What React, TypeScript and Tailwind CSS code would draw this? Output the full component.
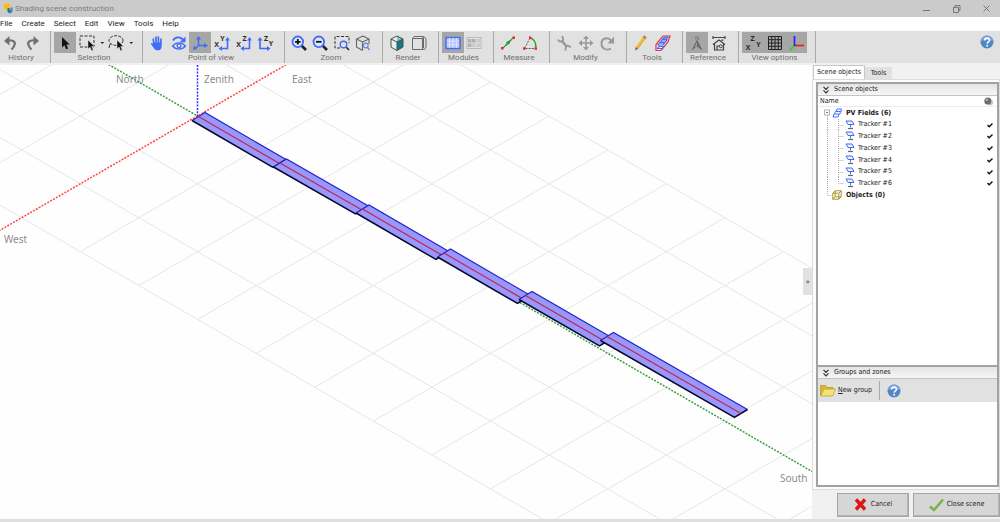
import React from "react";

type P = { children?: React.ReactNode };

function Ico({ children }: P) {
  return (
    <svg width="20" height="20" viewBox="0 0 20 20" fill="none" className="block shrink-0" aria-hidden="true">
      {children}
    </svg>
  );
}

function Tool({ label, on, children }: P & { label: string; on?: boolean }) {
  return (
    <button
      type="button"
      aria-label={label}
      aria-pressed={on ? true : undefined}
      className={
        on
          ? "flex h-[21px] min-w-0 flex-1 items-center justify-center overflow-hidden bg-[#a6a6a6]"
          : "flex h-[21px] min-w-0 flex-1 items-center justify-center overflow-hidden"
      }
    >
      {children}
    </button>
  );
}

function Group({ label, width, children }: P & { label: string; width: string }) {
  return (
    <div className={`flex h-full shrink-0 flex-col border-r border-[#a9a9a9] pt-px pr-[8px] pl-[3px] ${width}`}>
      <div className="flex">{children}</div>
      <div className="text-center text-[8px] leading-[9px] whitespace-nowrap text-[#6e6e6e]">{label}</div>
    </div>
  );
}

const BLUE = "#3f6df6";
const DARK = "#333";

function Letter({ x, y, children }: { x: number; y: number; children: string }) {
  return (
    <text x={x} y={y} fill="#2b2b2b" fontSize="7" fontWeight="700" fontFamily="Open Sans, sans-serif" textAnchor="middle">
      {children}
    </text>
  );
}

function Undo() {
  return (
    <Ico>
      <path d="M5 7.500c6-1 10 1 8.500 4.500-.5 1.500-1.500 3-3 4.500" stroke="#707070" strokeWidth="2.200" />
      <path d="M3 8 8.500 3v9.500z" fill="#707070" />
    </Ico>
  );
}
function Redo() {
  return (
    <Ico>
      <path d="M15 7.500c-6-1-10 1-8.500 4.500.5 1.500 1.500 3 3 4.500" stroke="#707070" strokeWidth="2.200" />
      <path d="M17 8 11.500 3v9.500z" fill="#707070" />
    </Ico>
  );
}
const arrowPath = "M0 0v9l2.100-1.900 1.500 3.600 1.700-.8-1.600-3.400h2.900z";
function Caret() {
  return <path d="M0 0h3.600l-1.800 2z" fill="#222" />;
}
function ZoomGlass({ minus }: { minus?: boolean }) {
  return (
    <Ico>
      <path d="m12.500 12.500 4.500 4.500" stroke="#222" strokeWidth="2.600" />
      <circle cx="8.800" cy="8.800" r="5.300" fill="#dfe5fb" stroke={BLUE} strokeWidth="1.800" />
      <path d={minus ? "M6 8.800h5.600" : "M6 8.800h5.600M8.800 6v5.600"} stroke="#111" strokeWidth="1.800" />
    </Ico>
  );
}
function AxisView({ a, b, flip }: { a: string; b: string; flip?: boolean }) {
  return (
    <Ico>
      {flip ? (
        <>
          <path d="M5 6v9.500h8" stroke={BLUE} strokeWidth="1.600" />
          <path d="M2.500 7.500 5 4l2.500 3.500zM12 13l3.500 2.500L12 18z" fill={BLUE} />
          <Letter x={11} y={8}>{a}</Letter>
          <Letter x={16} y={13}>{b}</Letter>
        </>
      ) : (
        <>
          <path d="M15.500 6v9.500H9" stroke={BLUE} strokeWidth="1.600" />
          <path d="M13 7.500 15.500 4 18 7.500zM10 13l-3.500 2.500L10 18z" fill={BLUE} />
          <Letter x={10.500} y={8}>{a}</Letter>
          <Letter x={4.500} y={13.500}>{b}</Letter>
        </>
      )}
    </Ico>
  );
}

function HelpIcon() {
  return (
    <svg width="14" height="14" viewBox="0 0 14 14" aria-hidden="true" className="block shrink-0">
      <circle cx="7" cy="7" r="6.500" fill="#4f86c6" />
      <path d="M1 6a6 5.500 0 0 1 12 0c-4-1.500-8-1.500-12 0z" fill="#79a5d9" />
      <path d="M4.700 5.500c0-3.200 4.800-3.100 4.800-.3 0 1.800-2.300 1.700-2.300 3.500" stroke="#fff" strokeWidth="1.600" fill="none" />
      <circle cx="7.200" cy="10.700" r="1" fill="#fff" />
    </svg>
  );
}

function Toolbar() {
  return (
    <div className="flex h-[32px] items-start bg-[#e1e1e1]">
      <div className="flex h-full w-[51px] shrink-0 flex-col border-r border-[#a9a9a9] pt-px pr-[8px]">
        <div className="flex">
          <Tool label="Undo"><Undo /></Tool>
          <Tool label="Redo"><Redo /></Tool>
        </div>
        <div className="text-center text-[8px] leading-[9px] text-[#6e6e6e]">History</div>
      </div>
      <Group label="Selection" width="w-[92px]">
        <Tool label="Select" on>
          <Ico><g transform="translate(7 4)"><path d="M0 0v10.500l2.500-2.200 1.600 4 2-.9-1.700-3.800h3.300z" fill="#111" /></g></Ico>
        </Tool>
        <button type="button" aria-label="Rectangle selection" className="h-[21px] w-[29px] shrink-0">
          <svg width="29" height="21" viewBox="0 0 29 21" fill="none">
            <rect x="4" y="4" width="14" height="11" stroke={DARK} strokeDasharray="3 1.500" />
            <g transform="translate(12 8)"><path d={arrowPath} fill="#111" stroke="#e1e1e1" strokeWidth=".5" /></g>
            <g transform="translate(24.500 10)"><Caret /></g>
          </svg>
        </button>
        <button type="button" aria-label="Lasso selection" className="h-[21px] w-[29px] shrink-0">
          <svg width="29" height="21" viewBox="0 0 29 21" fill="none">
            <ellipse cx="11" cy="8.500" rx="7" ry="4.800" stroke={DARK} strokeDasharray="3 1.300" />
            <path d="m5 12-1 4" stroke={DARK} />
            <g transform="translate(12 8)"><path d={arrowPath} fill="#111" stroke="#e1e1e1" strokeWidth=".5" /></g>
            <g transform="translate(24.500 10)"><Caret /></g>
          </svg>
        </button>
      </Group>
      <Group label="Point of view" width="w-[142px]">
        <Tool label="Pan">
          <Ico>
            <path d="M6.800 11 6.300 6M9 10V4M11.400 10V4M13.700 11l.3-5" stroke={BLUE} strokeWidth="1.700" strokeLinecap="round" />
            <path d="M6 9.500h8.600v4c0 2-1 3.700-2.900 3.700H10c-1.500 0-2.300-.8-3-2l-2.900-4c-.5-1 .6-1.600 1.900-.5z" fill={BLUE} />
          </Ico>
        </Tool>
        <Tool label="Orbit">
          <Ico>
            <path d="M4 7.500C6.500 3.500 11 3.500 14 6.500" stroke={BLUE} strokeWidth="1.900" />
            <path d="M16.500 3.500v5.800h-5.800z" fill={BLUE} />
            <path d="M3.500 13c3.500-4.300 9.500-4.300 13 0-3.500 4-9.500 4-13 0z" stroke={BLUE} strokeWidth="1.300" />
            <circle cx="10" cy="12.800" r="1.900" stroke={BLUE} strokeWidth="1.300" />
          </Ico>
        </Tool>
        <Tool label="Perspective view" on>
          <Ico>
            <path d="M8.500 5v7.500H15M8.500 12.500l-3.500 3" stroke={BLUE} strokeWidth="1.500" />
            <path d="M6 6.500 8.500 3 11 6.500zM14 10l4 2.500-4 2.500zM3 17l1-4.300 3.300 3.300z" fill={BLUE} />
          </Ico>
        </Tool>
        <Tool label="Top view"><AxisView a="Y" b="X" /></Tool>
        <Tool label="Front view"><AxisView a="Z" b="X" /></Tool>
        <Tool label="Side view"><AxisView a="Z" b="Y" flip /></Tool>
      </Group>
      <Group label="Zoom" width="w-[98px]">
        <Tool label="Zoom in"><ZoomGlass /></Tool>
        <Tool label="Zoom out"><ZoomGlass minus /></Tool>
        <Tool label="Zoom window">
          <Ico>
            <path d="M8 15H3V3.500h14V10" stroke={DARK} strokeDasharray="3 1.500" />
            <path d="m14 14 3 3" stroke="#222" strokeWidth="1.600" />
            <circle cx="11.500" cy="11.500" r="3.300" fill="#e1e1e1" stroke={BLUE} strokeWidth="1.400" />
          </Ico>
        </Tool>
        <Tool label="Zoom extents">
          <Ico>
            <path d="M10 3 3.500 6v8l6 3.500M10 3l6 3v5M3.500 6l6 3 6.500-3M9.500 9v8.500" stroke="#666" strokeWidth="1.100" />
            <circle cx="12.800" cy="12.500" r="2.300" fill="#e1e1e1" stroke="#6687e8" strokeWidth="1.200" />
            <path d="m14.500 14.500 2 2.500" stroke="#6687e8" strokeWidth="1.300" />
          </Ico>
        </Tool>
      </Group>
      <Group label="Render" width="w-[56px]">
        <Tool label="Realistic">
          <Ico>
            <path d="m10 3 6 3v8l-6 3.500z" fill="#0e7c80" />
            <path d="m10 3 6 3-6 3z" fill="#79c5c6" />
            <path d="m10 3-6 3v8l6 3.500z" fill="#e9eeee" />
            <path d="M10 3 4 6v8l6 3.500 6-3.500V6zM4 6l6 3 6-3M10 9v8.500" stroke="#4a5151" />
          </Ico>
        </Tool>
        <Tool label="Technical">
          <Ico>
            <path d="M3.500 5.500h10v11h-10zM3.500 5.500l1.500-2h9.500l2.500 2v8.500l-1.500 2.500h-2M14.500 4v11M13.500 5.500l1-1.500" stroke="#6a6a6a" />
          </Ico>
        </Tool>
      </Group>
      <Group label="Modules" width="w-[55px]">
        <Tool label="Show modules" on>
          <Ico>
            <rect x="3" y="4.500" width="14" height="11" fill="#b9c6ff" stroke={BLUE} strokeWidth="1.400" />
            <path d="M6.500 5v10M10 5v10M13.500 5v10M4 8.200h12M4 11.800h12" stroke="#dbe3ff" />
          </Ico>
        </Tool>
        <Tool label="Partial modules">
          <Ico>
            <rect x="3" y="4.500" width="14" height="11" stroke="#bbb" />
            <path d="M4 6h3.500v3.500H4zM8 6h3.500v3.500H8zM4 10.500h3.500V14H4z" fill="#b0b0b0" />
            <path d="M12.500 6H16v3.500h-3.500zM8 10.500h3.500V14H8zM12.500 10.500H16V14h-3.500z" fill="#cacaca" />
          </Ico>
        </Tool>
      </Group>
      <Group label="Measure" width="w-[56px]">
        <Tool label="Measure distance">
          <Ico>
            <path d="m5 15 10-10" stroke="#359b35" strokeWidth="1.200" />
            <path d="m7.500 12.500 3-3.800 1.300 1.300zM13 7l-3 4-1.500-1.500z" fill="#359b35" stroke="#359b35" />
            <path d="M3 14h2.500v2.500H3zM14.500 3.500H17V6h-2.500z" fill="#f02525" />
          </Ico>
        </Tool>
        <Tool label="Measure angle">
          <Ico>
            <path d="M10 5 4.500 15.500H16" stroke="#555" strokeDasharray="2 1.200" />
            <path d="M10 5c4 1 6 5 5.800 9" stroke="#359b35" strokeWidth="1.600" />
            <path d="M9 3.500h2.400V6H9zM3 14.300h2.500v2.500H3zM14.500 14.300H17v2.500h-2.500z" fill="#f02525" />
          </Ico>
        </Tool>
      </Group>
      <Group label="Modify" width="w-[77px]">
        <Tool label="Edit object">
          <Ico>
            <path d="m8 8 4.500 5.500" stroke="#999" strokeWidth="2.600" />
            <path d="M7.800 3.200c2.200 2 1.800 5-.6 5.300C5.500 8.700 4.500 8 4 6.500" stroke="#999" strokeWidth="1.900" />
            <path d="M11.700 17.500c-.6-2.500.3-4.500 2-4.700 1.500-.1 2.300.7 2.700 2" stroke="#999" strokeWidth="1.900" />
          </Ico>
        </Tool>
        <Tool label="Move object">
          <Ico>
            <path d="M10 5v10M5 10h10" stroke="#999" strokeWidth="1.500" />
            <path d="m7 6 3-3.500L13 6zM7 14l3 3.500 3-3.500zM6 7l-3.500 3L6 13zM14 7l3.500 3-3.500 3z" fill="#999" />
          </Ico>
        </Tool>
        <Tool label="Rotate object">
          <Ico>
            <path d="M14 15.500c-4 2.500-9.500.5-9.500-5C4.500 5 11 3.500 14.500 8" stroke="#999" strokeWidth="1.900" />
            <path d="M17 3.500v7h-6.500z" fill="#999" />
          </Ico>
        </Tool>
      </Group>
      <Group label="Tools" width="w-[56px]">
        <Tool label="Draw">
          <Ico>
            <path d="M6 15 13.500 4.500" stroke="#e7ae36" strokeWidth="3.200" />
            <path d="m5.500 14 7.500-10" stroke="#f7d377" strokeWidth="1" />
            <path d="m13 5.200 1.500-2" stroke="#d07842" strokeWidth="3.200" />
            <path d="m4.700 14-.7 3.500 3.200-1.700z" fill="#7b6242" />
          </Ico>
        </Tool>
        <Tool label="Zone fill">
          <Ico>
            <path d="m3 11.500 7-8.500h7l-2 6-7 8.500H3z" fill="#f5e8ef" stroke="#ee3434" strokeWidth="1.200" />
            <path d="m5 12 1.500-2h5l-1.500 2zM7.500 9 9 7h5l-1.500 2zM4.500 15.500l1.500-2h5l-1.500 2zM10 6l1.500-1.800H15L13.500 6z" stroke={BLUE} strokeWidth="1.200" />
          </Ico>
        </Tool>
      </Group>
      <Group label="Reference" width="w-[56px]">
        <Tool label="North reference" on>
          <Ico>
            <path d="m10 6.500 5.500 11L10 13.500l-5.500 4z" fill="#686868" />
            <path d="m10 9-2.700 6L10 13z" fill="#a6a6a6" />
            <text x="10" y="7" textAnchor="middle" fontSize="6" fontFamily="Open Sans, sans-serif" fill="#666">N</text>
          </Ico>
        </Tool>
        <Tool label="Site reference">
          <Ico>
            <path d="M4 4.500h12M4 3v3M16 3v3M4 11.500l6-4.500 6 4.500M5.500 11v6h9v-6M8 17v-4h2.500M13 8V7h1.500" stroke="#444" strokeWidth="1.200" />
            <circle cx="11.800" cy="13.300" r="1.500" stroke="#444" />
          </Ico>
        </Tool>
      </Group>
      <Group label="View options" width="w-[77px]">
        <Tool label="Axis labels" on>
          <Ico>
            <Letter x={9.500} y={7.500}>Z</Letter>
            <Letter x={5} y={17}>X</Letter>
            <Letter x={15.500} y={14}>Y</Letter>
          </Ico>
        </Tool>
        <Tool label="Grid" on>
          <Ico>
            <path d="M3.500 3.500h13v13h-13zM6.700 3.500v13M10 3.500v13M13.300 3.500v13M3.500 6.700h13M3.500 10h13M3.500 13.300h13" stroke="#222" />
          </Ico>
        </Tool>
        <Tool label="Axes" on>
          <Ico>
            <path d="M8.500 12.500 4 17" stroke="#23d923" strokeWidth="1.800" />
            <path d="M8.500 12.500H18" stroke="#ea2020" strokeWidth="1.700" />
            <path d="M8.500 13V3" stroke="#2626ef" strokeWidth="1.700" />
          </Ico>
        </Tool>
      </Group>
      <button type="button" aria-label="Help" className="mt-[4px] mr-[6px] ml-auto">
        <HelpIcon />
      </button>
    </div>
  );
}

const OX = 197.5;
const OY = 51;
const DX = 58.6;
const DY = 33.9;
const node = (a: number, b: number) => {
  // a: index across the slope (k - j), b: index along it (k + j)
  const k = (a + b) / 2;
  const j = (b - a) / 2;
  return [OX + k * DX, OY + j * DY];
};
const along = [-6, -4, -2, 2, 4, 6];
const across = Array.from({ length: 40 }, (_, i) => -16 + i * 2).filter((n) => n !== 0);

const trackers = [
  [192, 55.5, 81, 47],
  [273.5, 102, 82, 47],
  [356, 148, 80, 46.5],
  [437.5, 192, 80, 46.5],
  [519, 234.5, 80.5, 46.5],
  [600.5, 275.5, 134, 77],
];

function GridLine({ p, q }: { p: number[]; q: number[] }) {
  return <line x1={p[0]} y1={p[1]} x2={q[0]} y2={q[1]} stroke="#e6e6e6" />;
}

function Scene() {
  const w = node(-6, 0);
  const e = node(6, 0);
  const n = node(0, -16);
  const s = node(0, 62);
  return (
    <svg className="absolute inset-0 h-full w-full" role="img" aria-label="Shading scene">
      {along.map((a) => <GridLine key={a} p={node(a, -16)} q={node(a, 62)} />)}
      {across.map((b) => <GridLine key={b} p={node(-6, b)} q={node(6, b)} />)}
      <g strokeWidth="1.500" strokeDasharray="2 1.300">
        <line x1={w[0] - DX * 2} y1={w[1] + DY * 2} x2={e[0]} y2={e[1]} stroke="#ff4444" />
        <line x1={n[0]} y1={n[1]} x2={s[0]} y2={s[1]} stroke="#3c9f3c" />
        <line x1={OX} y1="0" x2={OX} y2={OY} stroke="#3030ff" />
      </g>
      {trackers.map(([x, y, lx, ly]) => (
        <g key={x}>
          <path d={`M${x} ${y}l13-8l${lx} ${ly}l-13 8z`} fill="#9898fc" />
          <path d={`M${x} ${y}l13-8l${lx} ${ly}`} fill="none" stroke="#2424c8" strokeWidth="1.200" />
          <path d={`M${x} ${y}l${lx} ${ly}l13-8`} fill="none" stroke="#09092f" strokeWidth="1.500" />
          <path d={`M${x + 6.5} ${y - 4}l${lx} ${ly}`} stroke="#c32550" strokeWidth="1.200" />
        </g>
      ))}
      <g fill="#8c8c8c" fontSize="10" fontFamily="Noto Sans, sans-serif">
        <text x="116" y="18">North</text>
        <text x="204" y="18">Zenith</text>
        <text x="292" y="18">East</text>
        <text x="4" y="178">West</text>
        <text x="780" y="417">South</text>
      </g>
    </svg>
  );
}

function Chevrons() {
  return (
    <svg width="6" height="8" viewBox="0 0 6 8" fill="none" stroke="#333" strokeWidth="1.200" aria-hidden="true">
      <path d="m.5 .8 2.500 2.500L5.500 .8M.5 4.300 3 6.800l2.500-2.500" />
    </svg>
  );
}

function PanelHead({ children }: P) {
  return (
    <h2 className="flex h-[12px] shrink-0 items-center gap-[5px] border-b border-[#c4c4c4] bg-linear-to-b from-[#e4e4e4] to-[#f6f6f6] pl-[5px] leading-[11px] text-[#222]">
      <Chevrons />
      {children}
    </h2>
  );
}

function TrackerIcon() {
  return (
    <svg width="10" height="10" viewBox="0 0 10 10" fill="none" aria-hidden="true">
      <path d="M1 1h6l2 3.500H3z" stroke={BLUE} fill="#eaf1ff" />
      <path d="M5.500 4.500v3" stroke={BLUE} />
      <path d="M3 8.500h5" stroke="#666" strokeWidth="1.200" />
    </svg>
  );
}

function Tree() {
  return (
    <ul className="grid h-[94px] shrink-0 grid-rows-8 text-[#222]">
      <li className="flex items-center pl-[5px] font-bold">
        <svg width="8" height="12" viewBox="0 0 8 12" fill="none" className="mr-px" aria-hidden="true">
          <rect x="1.500" y="3" width="5" height="5" stroke="#b5b5b5" fill="#fff" />
          <path d="M3 5.500h2" stroke="#777" />
          <path d="M4.500 8.500V12" stroke="#aaa" strokeDasharray="1 1" />
        </svg>
        <svg width="10" height="10" viewBox="0 0 10 10" fill="none" stroke={BLUE} className="mr-[4px]" aria-hidden="true">
          <path d="m1 9 1-3h5L6 9zM2.500 5.500l1-2h5L7.700 6.500M4.200 3l.8-2h4.500L8.800 4" />
        </svg>
        PV Fields (6)
      </li>
      {[1, 2, 3, 4, 5, 6].map((n) => (
        <li key={n} className="flex items-center pr-[4px] pl-[5px]">
          <svg width="22" height="12" viewBox="0 0 22 12" stroke="#aaa" strokeDasharray="1 1" aria-hidden="true">
            <path d={n === 6 ? "M4.500 0v12M15.500 0v6M15.500 6.500h6" : "M4.500 0v12M15.500 0v12M15.500 6.500h6"} fill="none" />
          </svg>
          <TrackerIcon />
          <span className="ml-[3px]">Tracker #{n}</span>
          <svg width="6" height="6" viewBox="0 0 6 6" fill="none" className="ml-auto" role="img" aria-label="visible">
            <path d="m.5 3 1.700 1.700L5.500 1.500" stroke="#111" strokeWidth="1.500" />
          </svg>
        </li>
      ))}
      <li className="flex items-center pl-[5px] font-bold">
        <svg width="9" height="12" viewBox="0 0 9 12" fill="none" stroke="#aaa" strokeDasharray="1 1" aria-hidden="true">
          <path d="M4.500 0v6M4.500 6.500h4" />
        </svg>
        <svg width="10" height="10" viewBox="0 0 10 10" fill="none" stroke="#a39728" className="mr-[4px]" aria-hidden="true">
          <path d="M.8 3.200h6v6h-6zM3.200.8h6v6h-6zM.8 3.200 3.200.8M6.800 3.200 9.200.8M6.800 9.200l2.400-2.400M.8 9.200l2.400-2.400" />
        </svg>
        Objects (0)
      </li>
    </ul>
  );
}

function SidePanel() {
  return (
    <aside className="flex w-[188px] shrink-0 flex-col bg-[#f1f1f1] font-['DejaVu_Sans_Condensed','DejaVu_Sans',sans-serif] text-[7px]">
      <div role="tablist" className="flex h-[14px] items-end pl-px">
        <button type="button" role="tab" aria-selected="true" className="h-[14px] w-[52px] border-x border-t border-[#c8c8c8] bg-white text-[#222]">
          Scene objects
        </button>
        <button type="button" role="tab" aria-selected="false" className="h-[12px] w-[27px] bg-[#e1e1e1] text-[#222]">
          Tools
        </button>
      </div>
      <div className="flex min-h-0 flex-1 flex-col border border-[#dcdcdc] bg-[#fbfbfb] py-[2px] pl-[3px]">
        <div className="flex flex-1 flex-col border-2 border-[#a2a2a2] bg-white">
          <section className="flex flex-1 flex-col">
            <PanelHead>Scene objects</PanelHead>
            <div className="flex h-[11px] shrink-0 items-center justify-between border-b border-[#ededed] pr-[4px] pl-[2px] text-[#222]">
              Name
              <svg width="9" height="9" viewBox="0 0 9 9" role="img" aria-label="Visibility">
                <circle cx="6" cy="5.500" r="3" fill="#c4c4c4" />
                <circle cx="3.800" cy="4" r="3.500" fill="#6d6d6d" />
                <circle cx="2.800" cy="2.800" r="1.400" fill="#aaa" />
              </svg>
            </div>
            <Tree />
          </section>
          <section className="flex flex-col border-t-2 border-[#a2a2a2]">
            <PanelHead>Groups and zones</PanelHead>
            <div className="flex h-[23px] items-center bg-[#e1e1e1] pl-[2px]">
              <button type="button" className="flex items-center gap-[2px] text-[#222]">
                <svg width="16" height="13" viewBox="0 0 16 13" aria-hidden="true">
                  <path d="M.5 11.500v-10h5l1.500 2h6V6" fill="#d9b82c" stroke="#b89b28" strokeWidth=".8" />
                  <path d="M.8 12 4 5h11.500l-2.800 7z" fill="#f1e27a" stroke="#c2a62d" strokeWidth=".8" />
                </svg>
                <span><u>N</u>ew group</span>
              </button>
              <span className="mx-[7px] h-[19px] w-px bg-[#a9a9a9]" />
              <button type="button" aria-label="Help on groups"><HelpIcon /></button>
            </div>
            <div className="h-[83px]" />
          </section>
        </div>
      </div>
      <div className="flex h-[29px] shrink-0 items-center justify-end gap-[4px] text-[#222]">
        <button type="button" className="flex h-[24px] w-[72px] items-center justify-center gap-[4px] border border-[#a5a5a5] bg-[#d6d6d6] shadow-[inset_-1px_-1px_0_#b5b5b5]">
          <svg width="13" height="13" viewBox="0 0 13 13" aria-hidden="true">
            <path d="m2 1.500 9 10M11 1.500l-9 10" stroke="#df1414" strokeWidth="3.400" />
          </svg>
          Cancel
        </button>
        <button type="button" className="flex h-[24px] w-[87px] items-center justify-center gap-[3px] border border-[#a5a5a5] bg-[#d6d6d6] shadow-[inset_-1px_-1px_0_#b5b5b5]">
          <svg width="15" height="14" viewBox="0 0 15 14" fill="none" aria-hidden="true">
            <path d="M1 8.500 5 12 14 1.500" stroke="#7cb342" strokeWidth="2.600" />
          </svg>
          Close scene
        </button>
      </div>
    </aside>
  );
}

export default function App() {
  return (
    <div className="flex min-h-screen flex-col bg-white font-[Roboto,sans-serif] text-[8px]">
      <header className="flex h-[17px] shrink-0 items-center bg-[#cbcbcb] pl-[3px]">
        <svg width="11" height="11" viewBox="0 0 11 11" aria-hidden="true">
          <path d="M5 4h4.500v5L7 10.500 5 9z" fill="#3b86c4" />
          <path d="M5 4h4.500L8 5.500H5z" fill="#87bee6" />
          <circle cx="4.300" cy="3.800" r="3.500" fill="#f6bd22" />
          <path d="M4.500 5h2v5l-2-1z" fill="#2569a5" />
        </svg>
        <h1 className="ml-px text-[#7c7c7c]">Shading scene construction</h1>
        <div className="ml-auto flex items-center gap-[16px] pr-[6px]">
          {["M1 6.500h7", "M1.500 3.500h5v5h-5zM3 3V1.500h5v5H7", "m1.500 1.500 6 6M7.500 1.500l-6 6"].map((d, i) => (
            <button type="button" key={d} aria-label={["Minimize", "Restore", "Close"][i]} className="flex w-[14px] justify-center">
              <svg width="10" height="10" viewBox="0 0 10 10" fill="none" stroke="#777"><path d={d} /></svg>
            </button>
          ))}
        </div>
      </header>
      <nav className="flex h-[14px] shrink-0 items-center gap-[9px] bg-white text-[#1c1c1c]">
        {["File", "Create", "Select", "Edit", "View", "Tools", "Help"].map((m) => (
          <button type="button" key={m}>{m}</button>
        ))}
      </nav>
      <Toolbar />
      <div className="h-[2px] shrink-0 bg-[#f0f0f0]" />
      <div className="flex flex-1">
        <main className="relative min-w-0 flex-1 overflow-hidden bg-[#fefefe]">
          <Scene />
          <button
            type="button"
            aria-label="Collapse side panel"
            className="absolute top-[203px] right-0 h-[27px] w-[9px] bg-[#e1e1e1] text-[8px] leading-[27px] text-[#444]"
          >
            »
          </button>
        </main>
        <SidePanel />
      </div>
      <footer className="h-[3px] shrink-0 bg-[#dedede]" />
    </div>
  );
}
